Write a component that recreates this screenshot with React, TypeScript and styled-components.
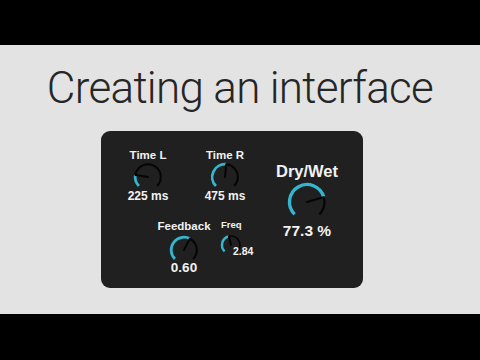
import React from "react";
import styled, { createGlobalStyle } from "styled-components";

const GlobalStyle = createGlobalStyle`
  html, body { margin: 0; padding: 0; background: #000; }
  #root { width: 480px; height: 360px; }
`;

const Page = styled.div`
  width: 480px;
  height: 360px;
  display: flex;
  flex-direction: column;
  background: #000;
  overflow: hidden;
`;

const Bar = styled.div<{ $h: number }>`
  height: ${(p) => p.$h}px;
  flex: none;
  background: #000;
`;

const Stage = styled.div`
  flex: 1;
  background: #e3e3e3;
  display: flex;
  flex-direction: column;
  padding-top: 17px;
`;

const Title = styled.h1`
  margin: 0;
  font-family: Roboto, "Liberation Sans", sans-serif;
  font-weight: 300;
  font-size: 44px;
  line-height: 52px;
  color: #262626;
  text-align: center;
  letter-spacing: -0.7px;
`;

const PanelRow = styled.div`
  display: flex;
  padding-left: 101px;
  margin-top: 17px;
`;

const Panel = styled.div`
  width: 262px;
  height: 157px;
  box-sizing: border-box;
  background: #202020;
  border-radius: 9px;
  display: flex;
  padding: 17px 0 0 22px;
  gap: 17px;
  font-family: "Liberation Sans", Arial, sans-serif;
  color: #f2f2f2;
`;

const LeftSection = styled.div`
  width: 127px;
  display: flex;
  flex-direction: column;
  gap: 16px;
`;

const KnobRow = styled.div<{ $indent?: number; $gap: number }>`
  display: flex;
  align-items: flex-start;
  padding-left: ${(p) => p.$indent ?? 0}px;
  gap: ${(p) => p.$gap}px;
`;

const Control = styled.div<{ $w: number; $align?: string; $top?: number }>`
  width: ${(p) => p.$w}px;
  flex: none;
  display: flex;
  flex-direction: column;
  align-items: ${(p) => p.$align ?? "center"};
  margin-top: ${(p) => p.$top ?? 0}px;
`;

const Label = styled.div<{ $size: number; $lh: number; $weight?: number }>`
  font-size: ${(p) => p.$size}px;
  line-height: ${(p) => p.$lh}px;
  font-weight: ${(p) => p.$weight ?? 700};
  white-space: nowrap;
`;

const Value = styled.div<{ $size: number; $lh: number; $mt: number; $ml?: number; $weight?: number }>`
  font-size: ${(p) => p.$size}px;
  line-height: ${(p) => p.$lh}px;
  font-weight: ${(p) => p.$weight ?? 700};
  margin-top: ${(p) => p.$mt}px;
  margin-left: ${(p) => p.$ml ?? 0}px;
  white-space: nowrap;
`;

const KnobSvg = styled.svg<{ $mt: number }>`
  display: block;
  margin-top: ${(p) => p.$mt}px;
  overflow: visible;
`;

const pt = (c: number, r: number, a: number) => {
  const rad = (a * Math.PI) / 180;
  return [c + r * Math.sin(rad), c - r * Math.cos(rad)];
};

const arc = (c: number, r: number, a1: number, a2: number) => {
  const [x1, y1] = pt(c, r, a1);
  const [x2, y2] = pt(c, r, a2);
  const large = a2 - a1 > 180 ? 1 : 0;
  return `M ${x1} ${y1} A ${r} ${r} 0 ${large} 1 ${x2} ${y2}`;
};

type KnobProps = {
  size: number;
  r: number;
  value: number;
  stroke: number;
  track: number;
  mt: number;
};

const Knob = ({ size, r, value, stroke, track, mt }: KnobProps) => {
  const c = size / 2;
  const a = -135 + value * 270;
  const [px, py] = pt(c, r, a);
  return (
    <KnobSvg width={size} height={size} viewBox={`0 0 ${size} ${size}`} $mt={mt}>
      <path d={arc(c, r, -135, 135)} fill="none" stroke="#050505" strokeWidth={track} />
      <path d={arc(c, r, -135, a)} fill="none" stroke="#35b6cf" strokeWidth={stroke} />
      <line x1={c} y1={c} x2={px} y2={py} stroke="#050505" strokeWidth={2} strokeLinecap="round" />
    </KnobSvg>
  );
};

export default function App() {
  return (
    <>
      <GlobalStyle />
      <Page>
        <Bar $h={45} />
        <Stage>
          <Title>Creating an interface</Title>
          <PanelRow>
            <Panel>
              <LeftSection>
                <KnobRow $gap={27}>
                  <Control $w={50}>
                    <Label $size={11.5} $lh={14}>Time L</Label>
                    <Knob size={28} r={12.8} value={0.2} stroke={2.8} track={2} mt={1} />
                    <Value $size={12} $lh={14} $mt={-2}>225 ms</Value>
                  </Control>
                  <Control $w={50}>
                    <Label $size={11.5} $lh={14}>Time R</Label>
                    <Knob size={28} r={12.8} value={0.52} stroke={2.8} track={2} mt={1} />
                    <Value $size={12} $lh={14} $mt={-2}>475 ms</Value>
                  </Control>
                </KnobRow>
                <KnobRow $indent={31} $gap={7}>
                  <Control $w={60}>
                    <Label $size={11.5} $lh={14}>Feedback</Label>
                    <Knob size={28} r={12.8} value={0.6} stroke={2.8} track={2} mt={2.7} />
                    <Value $size={13.5} $lh={16} $mt={-4}>0.60</Value>
                  </Control>
                  <Control $w={40} $align="flex-start">
                    <Label $size={9.5} $lh={12}>Freq</Label>
                    <Knob size={20} r={9} value={0.45} stroke={2.4} track={1.6} mt={4} />
                    <Value $size={10.5} $lh={12} $mt={-10} $ml={12}>2.84</Value>
                  </Control>
                </KnobRow>
              </LeftSection>
              <Control $w={80} $top={14}>
                <Label $size={16.5} $lh={19}>Dry/Wet</Label>
                <Knob size={40} r={17.5} value={0.773} stroke={3.4} track={2.2} mt={1} />
                <Value $size={15.5} $lh={18} $mt={0}>77.3 %</Value>
              </Control>
            </Panel>
          </PanelRow>
        </Stage>
        <Bar $h={46} />
      </Page>
    </>
  );
}
